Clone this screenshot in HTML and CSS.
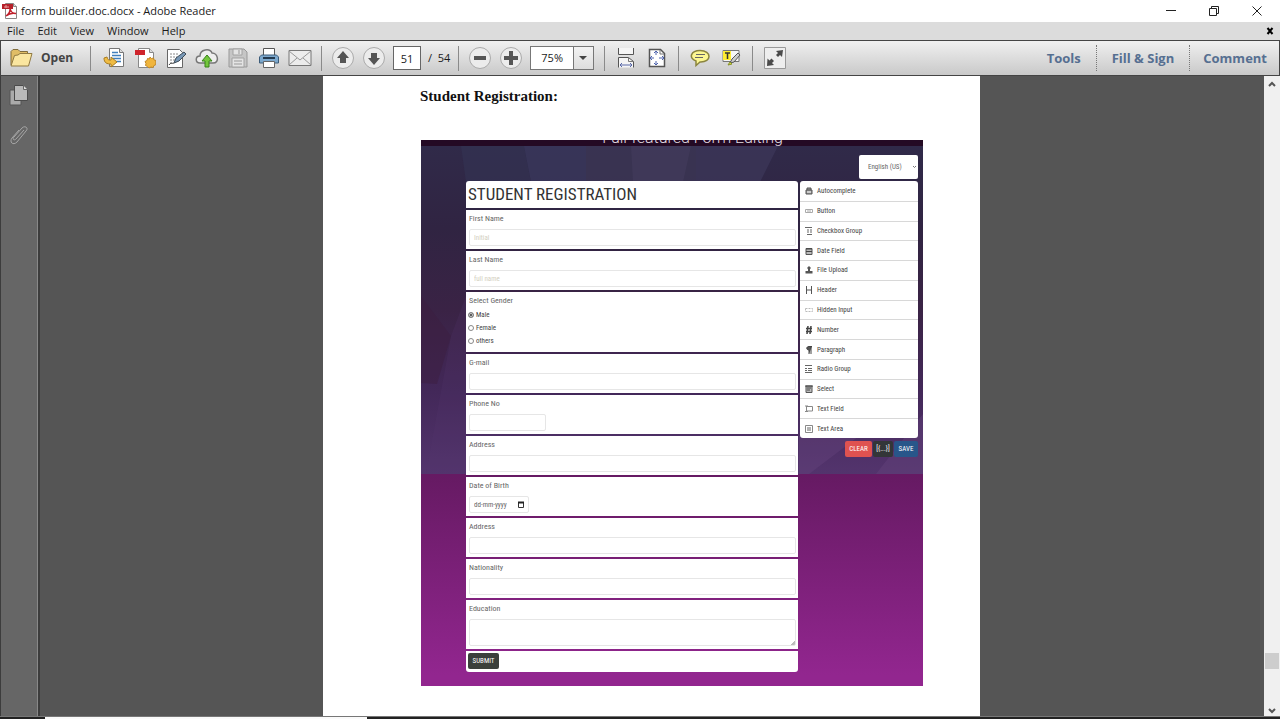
FILE: index.html
```html
<!DOCTYPE html>
<html lang="en">
<head>
<meta charset="utf-8">
<title>form builder.doc.docx - Adobe Reader</title>
<link rel="stylesheet" href="styles.css">
</head>
<body>
<div class="app">
  <header class="titlebar">
    <svg class="app-icon" width="16" height="16" viewBox="0 0 16 16"><path d="M3.500 .5h8l3 3v12h-11z" fill="#fff" stroke="#8b8585"/><path d="M11.500 .5v3h3" fill="#ddd" stroke="#8b8585"/><path d="M0 1h11v5H0z" fill="#b5202a"/><path d="M2 4h5M4 2v3" stroke="#e9a0a0"/><path d="M4 13c3-2 4.500-5 4-8 .5 4 2.500 5.500 6 5.500-4-1-7 0-10 2.500z" fill="none" stroke="#c0202b" stroke-width="1.500"/></svg>
    <span class="title">form builder.doc.docx - Adobe Reader</span>
    <div class="window-controls">
      <button aria-label="Minimize"><svg width="12" height="12" viewBox="0 0 12 12"><path d="M1 5.500h10" stroke="#222"/></svg></button>
      <button aria-label="Restore"><svg width="12" height="12" viewBox="0 0 12 12"><path d="M1.500 3.500h7v7h-7zM3.500 3v-1.500h7v7H9" fill="none" stroke="#222"/></svg></button>
      <button aria-label="Close"><svg width="12" height="12" viewBox="0 0 12 12"><path d="M1.500 1.500l9 9M10.500 1.500l-9 9" stroke="#222"/></svg></button>
    </div>
  </header>
  <nav class="menubar">
    <button>File</button><button>Edit</button><button>View</button><button>Window</button><button>Help</button>
    <button class="doc-close" aria-label="Close document"><svg width="8" height="8" viewBox="0 0 8 8"><path d="M1.500 1l5 6M6.500 1l-5 6" stroke="#000" stroke-width="2"/></svg></button>
  </nav>
  <div class="toolbar">
    <button class="open"><svg width="24" height="20" viewBox="0 0 24 20"><path d="M2 17V3.500L4 1.500h5l2 2h7.500V7" fill="#e0bd66" stroke="#806c3c"/><path d="M2 18L5.500 7.500 9 7l2-1.500h12L19.500 18z" fill="#fae6a0" stroke="#917a42"/></svg><span>Open</span></button>
    <div class="group">
      <button class="tool" aria-label="Convert"><svg width="22" height="22" viewBox="0 0 22 22"><path d="M6.500 1.500h10l4 4v14h-14z" fill="#fff" stroke="#777"/><path d="M16.500 1.500v4h4" fill="#ddd" stroke="#777"/><path d="M9 5.500h6M9 8.500h9M9 11.500h9M12 14.500h6" stroke="#4280bd" stroke-width="1.500"/><path d="M1 11c0 5 3 6 7 6v3l6-5-6-5v3c-3 0-3 0-4-3z" fill="#efbc45" stroke="#a97d22"/></svg></button>
      <button class="tool" aria-label="Create PDF"><svg width="22" height="22" viewBox="0 0 22 22"><path d="M4.500 1.500h11l4 4v15h-15z" fill="#fff" stroke="#888"/><path d="M15.500 1.500v4h4" fill="#ddd" stroke="#888"/><path d="M1 3h10v5H1z" fill="#cf242c"/><path d="M16 10l1.500 1.500 2-.5.5 2 2 .5-.5 2 .5 2-2 1-1 2-2-.5-2 1-1.500-1.500-2-1 .5-2-1-2 2-1 .5-2 2 .5z" fill="#f0b53d" stroke="#c48a25"/></svg></button>
      <button class="tool" aria-label="Edit"><svg width="22" height="22" viewBox="0 0 22 22"><path d="M2.500 2.500h12l3 3v15h-15z" fill="#fff" stroke="#666"/><path d="M5 7h9M5 10h7M5 13h5M5 16h3" stroke="#888" stroke-dasharray="2 1"/><path d="M9 16l2-5 8-6 2 2-7 7z" fill="#7897b5" stroke="#3d4c59"/><path d="M4 18c2-3 3-1 5-2" fill="none" stroke="#333"/></svg></button>
      <button class="tool" aria-label="Upload"><svg width="24" height="22" viewBox="0 0 24 22"><path d="M5 16C0 16 0 9 5 9c0-7 10-8 12-3 6 0 8 10 1 10z" fill="#eee" stroke="#777" stroke-width="1.500"/><path d="M12 8l5 6h-3v6h-4v-6H7z" fill="#73c63c" stroke="#368317"/></svg></button>
      <button class="tool" aria-label="Save file"><svg width="20" height="20" viewBox="0 0 20 20"><path d="M1 1h15l3 3v15H1z" fill="#c6c6c6" stroke="#999"/><path d="M5 1h9v6H5zM4 10h12v9H4z" fill="#e4e4e4" stroke="#a2a2a2"/><path d="M11 2v4M6 13h8M6 16h8" stroke="#999"/></svg></button>
      <button class="tool" aria-label="Print"><svg width="22" height="22" viewBox="0 0 22 22"><path d="M5.500 1.500h11v8h-11z" fill="#fff" stroke="#555"/><path d="M1.500 10l2-2h15l2 2v6h-19z" fill="#7da9ce" stroke="#3c5c7a"/><path d="M5 11h12" stroke="#23394e" stroke-width="2"/><path d="M5.500 14.500h11v6h-11z" fill="#fff" stroke="#666"/></svg></button>
      <button class="tool" aria-label="Email"><svg width="24" height="18" viewBox="0 0 24 18"><path d="M1 1.500h22v15H1z" fill="#ececec" stroke="#777"/><path d="M1 2l11 9L23 2M1 16l8-7M23 16l-8-7" fill="none" stroke="#999"/></svg></button>
    </div>
    <div class="group">
      <button class="tool" aria-label="Previous page"><svg width="22" height="22" viewBox="0 0 22 22"><circle cx="11" cy="11" r="10.500" fill="#ececec" stroke="#aaa"/><path d="M11 4l6 7h-3v5H8v-5H5z" fill="#555"/></svg></button>
      <button class="tool" aria-label="Next page"><svg width="22" height="22" viewBox="0 0 22 22"><circle cx="11" cy="11" r="10.500" fill="#ececec" stroke="#aaa"/><path d="M11 18l6-7h-3V6H8v5H5z" fill="#555"/></svg></button>
      <input class="page-no" aria-label="Page number" value="51"><span class="page-total">/&nbsp; 54</span>
    </div>
    <div class="group">
      <button class="tool" aria-label="Zoom out"><svg width="22" height="22" viewBox="0 0 22 22"><circle cx="11" cy="11" r="10.500" fill="#ececec" stroke="#aaa"/><path d="M5 11h12" stroke="#555" stroke-width="4"/></svg></button>
      <button class="tool" aria-label="Zoom in"><svg width="22" height="22" viewBox="0 0 22 22"><circle cx="11" cy="11" r="10.500" fill="#ececec" stroke="#aaa"/><path d="M4 11h14M11 4v14" stroke="#555" stroke-width="4"/></svg></button>
      <div class="zoom"><select aria-label="Zoom"><option>75%</option></select><svg width="20" height="22" viewBox="0 0 20 22"><path d="M.5 0v22" stroke="#777"/><path d="M6 9h8l-4 4z" fill="#444"/></svg></div>
    </div>
    <div class="group">
      <button class="tool" aria-label="Fit width"><svg width="18" height="20" viewBox="0 0 18 20"><path d="M1.500 0v6.500h15V0M1.500 19.500V9.500h10l5 4v6" fill="#f5f5f5" stroke="#555"/><path d="M11.500 9.500v4h5" fill="none" stroke="#777"/><path d="M3 17h12M5 15l-2 2 2 2M13 15l2 2-2 2" fill="none" stroke="#5868a8"/></svg></button>
      <button class="tool" aria-label="Fit page"><svg width="18" height="20" viewBox="0 0 18 20"><path d="M1.500 1.500h11l4 4v13h-15z" fill="#fff" stroke="#555" stroke-width="1.500"/><path d="M12 2v4h4" fill="none" stroke="#777"/><path d="M8 3v4M8 13v4M2 10h4M11 10h5M6 5l2-2 2 2M6 15l2 2 2-2M4 8l-2 2 2 2M14 8l2 2-2 2" fill="none" stroke="#4d62ad"/></svg></button>
    </div>
    <div class="group">
      <button class="tool" aria-label="Comment note"><svg width="20" height="18" viewBox="0 0 20 18"><path d="M10 1.500c12 0 12 12 0 11.500l-4 3.500V12C-2 9 1 1.500 10 1.500z" fill="#fcf792" stroke="#8a843e" stroke-width="1.500"/><path d="M6 5.500h9M5 8.500h8" stroke="#666"/></svg></button>
      <button class="tool" aria-label="Highlight text"><svg width="20" height="20" viewBox="0 0 20 20"><path d="M2 2.500h16v11H2z" fill="#f6f6f6" stroke="#777"/><path d="M2 3h8v9H2z" fill="#ffed32"/><path d="M4 5h5M6.500 5v6" stroke="#333" stroke-width="1.500"/><path d="M9 15l2-4 6-6 2 2-6 7z" fill="#ccc" stroke="#555"/><path d="M7 17l2-3 2 2z" fill="#d5df43" stroke="#879127"/></svg></button>
    </div>
    <div class="group last">
      <button class="tool" aria-label="Full screen"><svg width="22" height="22" viewBox="0 0 22 22"><path d="M.5.5h21v21H.5z" fill="#eee" stroke="#999"/><path d="M12 4l7-1-1 7-2-2-2 2-2-2 2-2zM3.500 11.500l2 2 2-2 2.500 2.500-2 2 2 2-7 1z" fill="#4b4b4b"/></svg></button>
    </div>
    <div class="panes"><button>Tools</button><button>Fill &amp; Sign</button><button>Comment</button></div>
  </div>

  <div class="workspace">
    <aside class="rail">
      <button aria-label="Page thumbnails"><svg width="20" height="22" viewBox="0 0 20 22"><path d="M1 6h11v15H1z" fill="#aaa" stroke="#555"/><path d="M5.500 1.500h9l4 4v11h-13z" fill="#b9b9b9" stroke="#4b4b4b"/><path d="M14.500 1.500v4h4" fill="#ddd" stroke="#666"/></svg></button>
      <button aria-label="Attachments"><svg width="20" height="22" viewBox="0 0 20 22"><path d="M15 6L7 15c-2 2-4 0-2-2l8-9c3-3 7 0 4 3l-9 11c-4 4-8 0-5-4l7-8" fill="none" stroke="#a7a7a7"/></svg></button>
    </aside>
    <main class="viewer">
      <article class="paper">
        <h1>Student Registration:</h1>
        <section class="demo">
          <div class="demo-title"><span>Full-featured Form Editing</span></div>
          <div class="demo-body">
            <svg class="facets" viewBox="0 0 502 328" preserveAspectRatio="none" aria-hidden="true">
              <defs><linearGradient id="night" x2="0" y2="1"><stop stop-color="#302a49"/><stop offset=".25" stop-color="#302442"/><stop offset=".5" stop-color="#3a2345"/><stop offset=".75" stop-color="#432859"/><stop offset="1" stop-color="#53346d"/></linearGradient></defs>
              <path d="M0 0h502v328H0z" fill="url(#night)"/>
              <path d="M40 0h63l7 36H45z" fill="#343555" opacity=".5"/>
              <path d="M103 0h62v36h-55z" fill="#3c3c63" opacity=".6"/><path d="M165 0h110v36H165z" fill="#403a58" opacity=".6"/><path d="M210 0h60l-8 36h-50z" fill="#484163" opacity=".4"/><path d="M275 0h82l-18 36h-64z" fill="#403a5e" opacity=".6"/>
              <path d="M0 150l30 40-14 48-16-1z" fill="#3b1d40" opacity=".5"/><path d="M30 190l15-40v178H5z" fill="#563570" opacity=".2"/>
              <path d="M378 290h60l-50 38h-10zM455 328l47-60v60z" fill="#6a4781" opacity=".35"/>
            </svg>
            <div class="language"><select aria-label="Language"><option>English (US)</option></select><svg width="5" height="4" viewBox="0 0 5 4"><path d="M1 1l1.500 1.500L4 1" fill="none" stroke="#777"/></svg></div>
            <div class="builder">
              <form class="fields" onsubmit="return false">
                <h2>STUDENT REGISTRATION</h2>
                <div class="field"><label for="first">First Name</label><input id="first" placeholder="Initial"></div>
                <div class="field"><label for="last">Last Name</label><input id="last" placeholder="full name"></div>
                <fieldset class="field gender"><legend>Select Gender</legend>
                  <label><input type="radio" name="gender" checked>Male</label>
                  <label><input type="radio" name="gender">Female</label>
                  <label><input type="radio" name="gender">others</label>
                </fieldset>
                <div class="field"><label for="mail">G-mail</label><input id="mail"></div>
                <div class="field"><label for="phone">Phone No</label><input class="short" id="phone"></div>
                <div class="field"><label for="addr1">Address</label><input id="addr1"></div>
                <div class="field"><label for="dob">Date of Birth</label><div class="date"><input id="dob" placeholder="dd-mm-yyyy"><svg width="6" height="7" viewBox="0 0 6 7"><path d="M.5 1.500h5v5h-5z" fill="none" stroke="#333"/><path d="M0 1.500h6" stroke="#222" stroke-width="2"/></svg></div></div>
                <div class="field"><label for="addr2">Address</label><input id="addr2"></div>
                <div class="field"><label for="nat">Nationality</label><input id="nat"></div>
                <div class="field education"><label for="edu">Education</label><textarea id="edu"></textarea></div>
                <div class="submit-row"><button>SUBMIT</button></div>
              </form>
              <aside class="palette">
                <ul>
                  <li><svg viewBox="0 0 8 8"><path d="M1 3h6v4H1zM2 3V1h4v2" fill="#999" stroke="#555"/><path d="M2 5h4" stroke="#fff"/></svg>Autocomplete</li>
                  <li><svg viewBox="0 0 8 8"><path d="M.5 2.500h7v3h-7zM2 4h4" fill="none" stroke="#aaa"/></svg>Button</li>
                  <li><svg viewBox="0 0 8 8"><path d="M0 .5h7M2 3h2M5 3h2M2 5h2M5 5h2M2 7.500h5" stroke="#666"/></svg>Checkbox Group</li>
                  <li><svg viewBox="0 0 8 8"><path d="M1 1.500h6v6H1z" fill="#bbb" stroke="#555"/><path d="M1 2h6M1 4.500h6" stroke="#444"/></svg>Date Field</li>
                  <li><svg viewBox="0 0 8 8"><path d="M4 0l2 2-1 1v2h2.500v2.500h-7V5H3V3L2 2z" fill="#555"/></svg>File Upload</li>
                  <li><svg viewBox="0 0 8 8"><path d="M1.500 0v8M6.500 0v8M1 4h6" stroke="#555"/></svg>Header</li>
                  <li><svg viewBox="0 0 8 8"><path d="M.5 2.500h7v3h-7z" fill="none" stroke="#bbb" stroke-dasharray="2 1"/></svg>Hidden Input</li>
                  <li><svg viewBox="0 0 8 8"><path d="M3 0L2 8M6 0L5 8M1 2.500h6M1 5.500h6" stroke="#444" stroke-width="1.500"/></svg>Number</li>
                  <li><svg viewBox="0 0 8 8"><path d="M7 .5H4C1 .5 1 4 4 4v4M6 0v8" stroke="#444" fill="#555"/></svg>Paragraph</li>
                  <li><svg viewBox="0 0 8 8"><path d="M0 .5h7M0 3.500h2M3 3.500h4M0 5.500h2M3 5.500h4M0 7.500h7" stroke="#666"/></svg>Radio Group</li>
                  <li><svg viewBox="0 0 8 8"><path d="M1 1h6v6.500H1z" fill="#bbb" stroke="#555"/><path d="M0 1h8M2 3h4M2 5h3" stroke="#444"/></svg>Select</li>
                  <li><svg viewBox="0 0 8 8"><path d="M2 1.500h5.500v4.500H2M1.500 1v6M0 1h3M0 6.500h3" fill="none" stroke="#888"/></svg>Text Field</li>
                  <li><svg viewBox="0 0 8 8"><path d="M.5.500h7v7h-7z" fill="none" stroke="#888"/><path d="M2 3h4M2 5h4" stroke="#666"/></svg>Text Area</li>
                </ul>
                <div class="actions"><button class="clear">CLEAR</button><button class="data">[{...}]</button><button class="save">SAVE</button></div>
              </aside>
            </div>
          </div>
        </section>
      </article>
    </main>
    <div class="scrollbar">
      <svg width="10" height="8" viewBox="0 0 10 8"><path d="M2 6l3-3 3 3" fill="none" stroke="#555" stroke-width="2"/></svg>
      <div class="thumb"></div>
      <svg width="10" height="8" viewBox="0 0 10 8"><path d="M2 2l3 3 3-3" fill="none" stroke="#555" stroke-width="2"/></svg>
    </div>
  </div>
  <footer class="taskbar"><div class="search"></div></footer>
</div>
</body>
</html>
```
FILE: styles.css
```css
* { box-sizing: border-box; }
body { margin: 0; font: 11px/16px "Open Sans", "Noto Sans", sans-serif; color: #1b1b1b; }
button, input, select, textarea { font: inherit; color: inherit; margin: 0; padding: 0; border: 0; border-radius: 0; background: none; }
input, textarea { min-width: 0; background: #fff; }
svg { display: block; flex: none; }
.app { display: flex; flex-direction: column; height: 100vh; overflow: hidden; background: #555; }

.titlebar { display: flex; align-items: center; height: 22px; flex: none; background: #fff; padding-left: 2px; gap: 3px; }
.window-controls { display: flex; margin-left: auto; height: 20px; padding-right: 2px; }
.window-controls button { width: 43px; display: grid; place-items: center; }
.menubar { display: flex; align-items: center; gap: 13px; height: 18px; flex: none; background: #dcdcdc; padding: 0 6px 0 7px; }
.menubar .doc-close { margin-left: auto; }

.toolbar { display: flex; align-items: center; height: 36px; flex: none; border: 1px solid #444; background: linear-gradient(#f0f0f0, #c9c9c9); }
.open { display: flex; align-items: center; gap: 8px; width: 89px; padding-left: 8px; font-size: 12px; font-weight: 700; color: #444; }
.group { display: flex; align-items: center; height: 25px; border-left: 1px solid #8a8a8a; padding: 0 6px 0 5px; }
.open + .group { padding-left: 7px; }
.tool { display: grid; place-items: center; width: 31px; height: 24px; }
.page-no { width: 28px; height: 24px; border: 1px solid #666; text-align: center; margin-left: 4px; }
.page-total { padding: 0 2px 0 7px; }
.zoom { display: grid; width: 64px; height: 24px; margin: 0 4px; border: 1px solid #777; background: #fff; align-items: center; justify-items: end; }
.zoom > * { grid-area: 1 / 1; }
.zoom select { width: 100%; appearance: none; padding-left: 10px; }
.zoom svg { background: linear-gradient(#f3f3f3, #ddd); pointer-events: none; }
.group.last { padding-left: 6px; }
.panes { display: flex; margin-left: auto; height: 26px; }
.panes button { padding: 0 15px; font-size: 13px; font-weight: 700; color: #566f91; border-left: 1px dotted #777; }
.panes button:first-child { border-left: 0; }
.panes button:last-child { padding: 0 12px 0 13px; }

.workspace { display: flex; flex: 1; min-height: 0; }
.rail { width: 40px; flex: none; background: #666; border-left: 1px solid #3c3c3c; border-right: 2px solid #3c3c3c; padding: 8px 2px 0 0; display: flex; flex-direction: column; align-items: center; gap: 18px; box-shadow: inset -1px 0 #888; }
.viewer { flex: 1; min-width: 0; overflow: hidden; display: flex; justify-content: center; background: #555; padding-right: 1px; }
.paper { width: 100%; max-width: 657px; background: #fff; padding: 10px 57px 0 98px; }
.paper h1 { margin: 0 0 34px; font: 700 15px/20px "Liberation Serif", serif; color: #111; text-indent: -1px; }
.scrollbar { width: 16px; flex: none; background: #f0f0f0; display: flex; flex-direction: column; align-items: center; padding: 4px 0 1px; }
.thumb { width: 14px; height: 16px; background: #cdcdcd; margin: auto 0 38px; }
.taskbar { height: 3px; flex: none; background: #222; border-top: 1px solid #777; padding-left: 45px; }
.search { width: 322px; height: 2px; background: #fafafa; }

.demo { font: 7px/10px "Roboto Condensed", Roboto, sans-serif; color: #666; background: #92268f; }
.demo-title { height: 6px; overflow: hidden; background: #240a24; color: #e4dfe4; font: 300 16px/16px Roboto, sans-serif; display: flex; align-items: flex-end; justify-content: center; padding-left: 41px; }
.demo-body { position: relative; padding: 9px 5px 14px 45px; background: linear-gradient(#661a63 61%, #92268f 98%); }
.facets { position: absolute; left: 0; top: 0; width: 100%; height: 328px; }
.language { position: relative; width: 59px; height: 24px; margin: 0 0 2px auto; display: grid; align-items: center; justify-items: end; background: #fff; border-radius: 2px; padding-right: 1px; }
.language > * { grid-area: 1 / 1; }
.language select { width: 100%; appearance: none; padding-left: 9px; }
.language svg { pointer-events: none; }
.builder { position: relative; display: flex; align-items: flex-start; gap: 2px; }
.fields { flex: 1; min-width: 0; display: flex; flex-direction: column; gap: 2px; border-radius: 3px; overflow: hidden; }
.fields h2 { margin: 0; height: 27px; padding-left: 2px; background: #fff; color: #333; font: 400 17px/27px "Roboto Condensed", Roboto, sans-serif; white-space: nowrap; }
.field { min-height: 39px; padding: 4px 2px 3px; background: #fff; display: flex; flex-direction: column; gap: 5px; }
.field > label, .field > legend { padding-left: 1px; font-size: 8px; }
.field > input, .date, .field textarea { height: 17px; margin-left: 1px; border: 1px solid #e6e6e6; border-radius: 2px; padding: 0 4px; }
.field ::placeholder { color: #d3cfc0; opacity: 1; }
.field .short { width: 77px; }
.gender { margin: 0; border: 0; height: 60px; display: block; }
.field.gender legend { float: left; width: 100%; padding: 0 0 0 1px; margin-bottom: 2px; }
.field.gender label { clear: both; display: flex; align-items: center; height: 13px; gap: 2px; color: #444; font-size: 7px; padding: 0; }
.gender input { appearance: none; width: 6px; height: 6px; border: 1px solid #888; border-radius: 50%; }
.gender input:checked { background: #333; box-shadow: inset 0 0 0 1px #ddd; }
.date { display: flex; align-items: center; width: 60px; background: #fff; }
.date input { flex: 1; height: 13px; }
.field .date ::placeholder { color: #666; }
.education { min-height: 49px; }
.field textarea { height: 27px; resize: none; background: linear-gradient(135deg, transparent 50%, #bbb 50%) no-repeat right bottom / 4px 4px #fff; }
.submit-row { height: 21px; background: #fff; padding: 2px; }
.submit-row button { display: block; width: 31px; height: 16px; border-radius: 2px; background: #3b403b; color: #fff; }
.palette { width: 118px; flex: none; }
.palette ul { list-style: none; margin: 0; padding: 1px 0 0; height: 257px; display: flex; flex-direction: column; background: #fff; border-radius: 3px; }
.palette li { flex: 1; display: flex; align-items: center; gap: 4px; padding-left: 5px; border-bottom: 1px solid #d8d8d8; color: #444; }
.palette li:last-child { border-bottom: 0; }
.palette li svg { width: 8px; height: 8px; }
.actions { display: flex; justify-content: flex-end; gap: 1px; padding-top: 3px; }
.actions button { height: 16px; color: #fff; border-radius: 2px; }
.clear { width: 27px; background: #df5250; }
.data { width: 20px; background: #333638; }
.save { width: 24px; background: #28568a; }
```
